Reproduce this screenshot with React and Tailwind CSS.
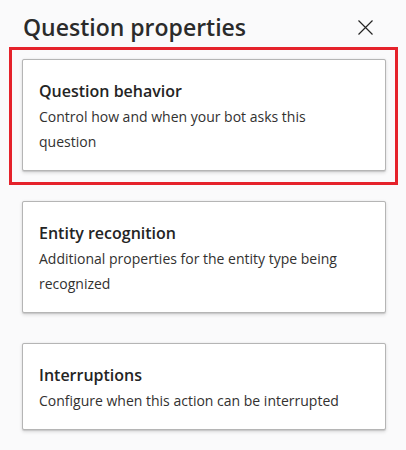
import React from "react";

const sections = [
  {
    title: "Question behavior",
    text: "Control how and when your bot asks this question",
    highlighted: true,
  },
  {
    title: "Entity recognition",
    text: "Additional properties for the entity type being recognized",
  },
  {
    title: "Interruptions",
    text: "Configure when this action can be interrupted",
  },
];

function CloseIcon() {
  return (
    <svg width="15" height="15" viewBox="0 0 15 15" fill="none" stroke="#242424" strokeWidth="1.2">
      <path d="M0.5 0.5 14.5 14.5M14.5 0.5 0.5 14.5" />
    </svg>
  );
}

function SectionCard({ title, text, highlighted }) {
  return (
    <div className="relative">
      {highlighted && (
        <div className="pointer-events-none absolute -left-[13px] -top-[12px] -right-[12px] -bottom-[14px] border-[3px] border-[#e5222b]" />
      )}
      <div className="bg-white border border-[#b5b5b5] rounded-[2px] shadow-[0_1.6px_3.6px_rgba(0,0,0,0.13),0_0.3px_0.9px_rgba(0,0,0,0.11)] pl-4 pr-4 pt-5 pb-4">
        <p className="text-[16px] leading-[22px] font-semibold text-[#242424]">{title}</p>
        <p className="mt-[2px] text-[14px] leading-[25px] text-[#323130] max-w-[318px]">{text}</p>
      </div>
    </div>
  );
}

export default function App() {
  return (
    <div
      className="w-[406px] h-[450px] bg-[#fafafb] overflow-hidden"
      style={{ fontFamily: '"Segoe UI", "Open Sans", "Noto Sans", sans-serif' }}
    >
      <div className="flex items-center justify-between pl-[23px] pr-[33px] pt-[11px]">
        <h1 className="text-[23px] leading-[32px] font-semibold text-[#2b2b2b]">Question properties</h1>
        <button className="flex items-center justify-center mt-[1px]">
          <CloseIcon />
        </button>
      </div>
      <div className="flex flex-col gap-[30px] pl-[22px] pr-[20px] pt-[16px]">
        {sections.map((s) => (
          <SectionCard key={s.title} {...s} />
        ))}
      </div>
    </div>
  );
}
